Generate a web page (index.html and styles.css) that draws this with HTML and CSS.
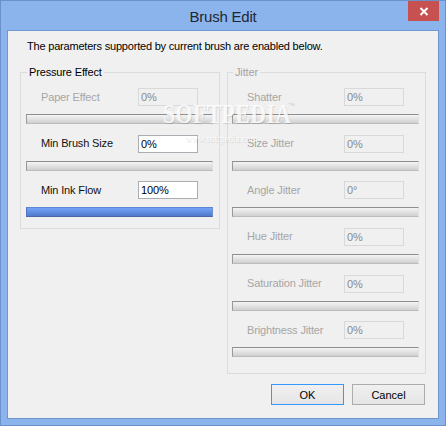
FILE: index.html
```html
<!DOCTYPE html>
<html>
<head>
<meta charset="utf-8">
<link rel="stylesheet" href="styles.css">
</head>
<body>
<div class="window">
  <div class="titlebar">
    <span class="title">Brush Edit</span>
    <button class="close" aria-label="Close">
      <svg width="10" height="9" viewBox="0 0 10 9"><path d="M1.5 1 L8.5 8 M8.5 1 L1.5 8" stroke="#fff" stroke-width="2" fill="none"/></svg>
    </button>
  </div>
  <div class="client">
    <p class="intro">The parameters supported by current brush are enabled below.</p>
    <div class="groups">
      <fieldset class="group group-pressure">
        <legend>Pressure Effect</legend>
        <div class="row disabled">
          <div class="field"><span class="label">Paper Effect</span><span class="textbox">0%</span></div>
          <div class="bar"></div>
        </div>
        <div class="row">
          <div class="field"><span class="label">Min Brush Size</span><span class="textbox">0%</span></div>
          <div class="bar"></div>
        </div>
        <div class="row">
          <div class="field"><span class="label">Min Ink Flow</span><span class="textbox">100%</span></div>
          <div class="bar bar-full"></div>
        </div>
      </fieldset>
      <fieldset class="group group-jitter disabled">
        <legend>Jitter</legend>
        <div class="row">
          <div class="field"><span class="label">Shatter</span><span class="textbox">0%</span></div>
          <div class="bar"></div>
        </div>
        <div class="row">
          <div class="field"><span class="label">Size Jitter</span><span class="textbox">0%</span></div>
          <div class="bar"></div>
        </div>
        <div class="row">
          <div class="field"><span class="label">Angle Jitter</span><span class="textbox">0°</span></div>
          <div class="bar"></div>
        </div>
        <div class="row">
          <div class="field"><span class="label">Hue Jitter</span><span class="textbox">0%</span></div>
          <div class="bar"></div>
        </div>
        <div class="row">
          <div class="field"><span class="label">Saturation Jitter</span><span class="textbox">0%</span></div>
          <div class="bar"></div>
        </div>
        <div class="row">
          <div class="field"><span class="label">Brightness Jitter</span><span class="textbox">0%</span></div>
          <div class="bar"></div>
        </div>
      </fieldset>
    </div>
    <div class="buttons">
      <button class="btn btn-default">OK</button>
      <button class="btn">Cancel</button>
    </div>
  </div>
  <div class="watermark">
    <span class="wm-big">SOFTPEDIA</span><span class="wm-tm">™</span>
    <span class="wm-url">www.softpedia.com</span>
  </div>
</div>
</body>
</html>
```

FILE: styles.css
```css
* { box-sizing: border-box; }
html, body { margin: 0; padding: 0; }
body {
  width: 446px;
  height: 426px;
  overflow: hidden;
  font-family: "Liberation Sans", Arial, sans-serif;
  font-size: 11px;
  letter-spacing: -0.15px;
}
.window {
  position: relative;
  width: 446px;
  height: 426px;
  border: 1px solid #6b91cb;
  background: #8cb4ec;
  display: flex;
  flex-direction: column;
}
.titlebar {
  height: 29px;
  display: grid;
  grid-template-columns: 1fr auto 1fr;
  align-items: start;
}
.title {
  grid-column: 2;
  font-family: "Liberation Sans", Arial, sans-serif;
  font-size: 15px;
  line-height: 15px;
  margin-top: 8px;
  color: #1e2733;
  letter-spacing: -0.2px;
}
.close {
  grid-column: 3;
  justify-self: end;
  margin: 0 6px 0 0;
  width: 31px;
  height: 20px;
  padding: 0;
  border: none;
  background: #c75050;
  display: flex;
  align-items: center;
  justify-content: center;
}
.close svg { display: block; }
.client {
  flex: 1;
  margin: 0 6px 6px 6px;
  border: 1px solid #6f96d0;
  background: #f0f0f0;
  padding: 9px 12px 0 12px;
}
.intro {
  margin: 0 0 0 7px;
  line-height: 13px;
  height: 13px;
  color: #000;
  letter-spacing: -0.2px;
}
.groups {
  display: flex;
  gap: 7px;
  margin-top: 13px;
  align-items: flex-start;
}
.group {
  margin: 0;
  border: 1px solid #dcdcdc;
  padding: 9px 6px 0 5px;
  min-width: 0;
}
.group legend {
  padding: 0 2px;
  margin-left: 1px;
  line-height: 13px;
  color: #000;
}
.group-pressure { width: 200px; height: 163px; }
.group-jitter { width: 199px; height: 308px; padding-left: 4px; }
.group.disabled legend { color: #a3a3a3; }
.row {
  height: 46.67px;
}
.field {
  display: flex;
  align-items: center;
  width: 172px;
  height: 18px;
  padding-left: 15px;
}
.label {
  color: #111;
  white-space: nowrap;
  line-height: 13px;
}
.textbox {
  margin-left: auto;
  width: 60px;
  height: 18px;
  border: 1px solid #abadb3;
  background: #fff;
  padding: 0 2px;
  line-height: 16px;
  color: #000;
}
.disabled .label { color: #a6a6a6; }
.disabled .textbox {
  border-color: #d9d9d9;
  background: #f0f0f0;
  color: #8a8a8a;
}
.bar {
  margin-top: 8px;
  width: 187px;
  height: 10px;
  border-top: 1px solid #8e8e8e;
  border-left: 1px solid #9a9a9a;
  border-right: 1px solid #e2e2e2;
  border-bottom: 1px solid #bcbcbc;
  background: linear-gradient(#f4f4f4, #e6e6e6 40%, #cfcfcf 100%);
}
.bar-full {
  border-top-color: #5d86d6;
  border-left-color: #4f73bd;
  border-right-color: #6d90d0;
  border-bottom-color: #4a68a8;
  background: linear-gradient(#72a2f6, #6796ec 35%, #5279c8 100%);
}
.buttons {
  display: flex;
  justify-content: flex-end;
  gap: 8px;
  margin-top: 10px;
  margin-right: 1px;
}
.btn {
  width: 73px;
  height: 21px;
  margin: 0;
  padding: 0;
  border: 1px solid #acacac;
  background: linear-gradient(#f0f0f0, #e5e5e5);
  font-family: "Liberation Sans", Arial, sans-serif;
  font-size: 11px;
  color: #000;
}
.btn-default {
  border-color: #3399ff;
}
.watermark {
  position: absolute;
  left: 162px;
  top: 97px;
  width: 140px;
  height: 50px;
  pointer-events: none;
}
.wm-big {
  position: absolute;
  left: 0;
  top: 0;
  font-family: "Liberation Serif", serif;
  font-weight: bold;
  font-size: 28px;
  line-height: 32px;
  color: rgba(255, 255, 255, 0.85);
  text-shadow: 1px 1px 1px rgba(0, 0, 0, 0.13);
  transform: scaleX(0.78);
  transform-origin: left top;
  letter-spacing: 0.5px;
}
.wm-tm {
  position: absolute;
  left: 125px;
  top: 4px;
  font-size: 7px;
  color: rgba(170, 170, 170, 0.5);
}
.wm-url {
  position: absolute;
  left: 22px;
  top: 34px;
  font-family: "Liberation Serif", serif;
  font-size: 11px;
  color: rgba(255, 255, 255, 0.8);
  text-shadow: 1px 1px 1px rgba(0, 0, 0, 0.12);
  transform: scaleX(0.85);
  transform-origin: left top;
}
```
